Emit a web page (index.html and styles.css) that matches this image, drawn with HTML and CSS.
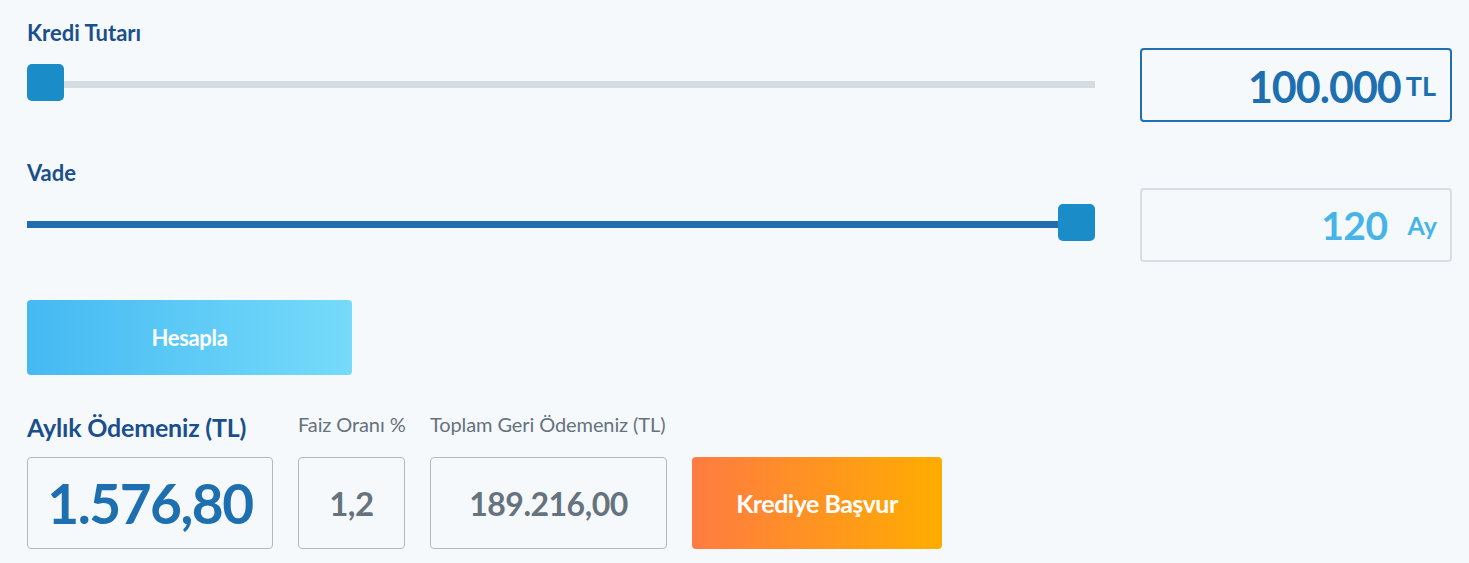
FILE: index.html
```html
<!DOCTYPE html>
<html lang="tr">
<head>
    <meta charset="UTF-8">
    <meta name="viewport" content="width=device-width, initial-scale=1.0">
    <title>Kredi Hesaplama</title>
    <link rel="stylesheet" href="styles.css">
</head>
<body>
    <div class="calculator">
        <div class="field">
            <div class="field-main">
                <label class="field-label" for="amount">Kredi Tutarı</label>
                <input type="range" class="slider" id="amount" min="100000" max="5000000" step="1000" value="100000" style="--fill: 0%">
            </div>
            <div class="value-box active">
                <span class="value">100.000</span>
                <span class="unit">TL</span>
            </div>
        </div>

        <div class="field">
            <div class="field-main">
                <label class="field-label" for="term">Vade</label>
                <input type="range" class="slider" id="term" min="3" max="120" step="1" value="120" style="--fill: 100%">
            </div>
            <div class="value-box">
                <span class="value">120</span>
                <span class="unit">Ay</span>
            </div>
        </div>

        <button class="btn-calc">Hesapla</button>

        <div class="results">
            <div class="result result-main">
                <span class="result-label">Aylık Ödemeniz (TL)</span>
                <div class="result-box">1.576,80</div>
            </div>
            <div class="result result-rate">
                <span class="result-label">Faiz Oranı %</span>
                <div class="result-box">1,2</div>
            </div>
            <div class="result result-total">
                <span class="result-label">Toplam Geri Ödemeniz (TL)</span>
                <div class="result-box">189.216,00</div>
            </div>
            <button class="btn-apply">Krediye Başvur</button>
        </div>
    </div>
</body>
</html>
```

FILE: styles.css
```css
body {
    margin: 0;
    background: #f5f9fc;
    font-family: "Source Sans Pro", Lato, "Liberation Sans", sans-serif;
}

.calculator {
    padding: 20px 18px 0 27px;
}

.field {
    display: flex;
    align-items: flex-end;
    gap: 45px;
    margin-bottom: 38px;
}

.field-main {
    width: 1068px;
    display: flex;
    flex-direction: column;
    padding-bottom: 19px;
}

.field-label {
    color: #1b4f8c;
    font-size: 22px;
    font-weight: 700;
    line-height: 26px;
    margin-bottom: 20px;
}

.slider {
    -webkit-appearance: none;
    appearance: none;
    width: 100%;
    height: 37px;
    margin: 0;
    background: transparent;
}

.slider::-webkit-slider-runnable-track {
    height: 7px;
    background: linear-gradient(to right, #1f6cae var(--fill), #d5dde3 var(--fill));
}

.slider::-webkit-slider-thumb {
    -webkit-appearance: none;
    width: 37px;
    height: 37px;
    margin-top: -17px;
    border-radius: 5px;
    background: #1a8cc7;
}

.value-box {
    width: 312px;
    height: 74px;
    margin-right: -1px;
    box-sizing: border-box;
    border: 2px solid #d8dde2;
    border-radius: 4px;
    display: flex;
    align-items: center;
    justify-content: flex-end;
    padding-right: 13px;
    color: #47b4e8;
}

.value-box .value {
    font-size: 39px;
    font-weight: 700;
    letter-spacing: -0.5px;
    margin-right: 20px;
}

.value-box .unit {
    font-size: 25px;
    font-weight: 700;
}

.value-box.active {
    border-color: #1f6fb2;
    color: #1e6fb0;
    padding-top: 2px;
    padding-right: 14px;
}

.value-box.active .value {
    font-size: 43px;
    margin-right: 5px;
    letter-spacing: -1px;
}

.value-box.active .unit {
    font-size: 27px;
    margin-bottom: 2px;
}

.btn-calc {
    display: block;
    width: 325px;
    height: 75px;
    border: none;
    border-radius: 4px;
    background: linear-gradient(to right, #45b9f2, #76dbfa);
    color: #fff;
    font-family: inherit;
    font-size: 22px;
    font-weight: 700;
    letter-spacing: -0.3px;
    cursor: pointer;
}

.results {
    display: flex;
    align-items: flex-end;
    gap: 25px;
    margin-top: 37px;
}

.result {
    display: flex;
    flex-direction: column;
}

.result-main {
    width: 246px;
}

.result-rate {
    width: 107px;
}

.result-total {
    width: 237px;
}

.result-label {
    color: #66727c;
    font-size: 20px;
    line-height: 24px;
    letter-spacing: -0.1px;
    white-space: nowrap;
    margin-bottom: 21px;
}

.result-main .result-label {
    color: #1b4f8c;
    font-size: 25px;
    font-weight: 700;
    line-height: 30px;
    letter-spacing: -0.2px;
    margin-bottom: 15px;
}

.result-box {
    height: 92px;
    box-sizing: border-box;
    border: 1px solid #b5b9bd;
    border-radius: 4px;
    display: flex;
    align-items: center;
    justify-content: center;
    color: #66727c;
    font-size: 32px;
    font-weight: 700;
    letter-spacing: -0.5px;
}

.result-main .result-box {
    color: #1e6fb0;
    font-size: 55px;
    letter-spacing: -1.5px;
}

.result-rate .result-box {
    font-size: 33px;
}

.btn-apply {
    width: 250px;
    height: 92px;
    border: none;
    border-radius: 4px;
    background: linear-gradient(to right, #ff7b42, #ffad00);
    color: #fff;
    font-family: inherit;
    font-size: 25px;
    font-weight: 700;
    letter-spacing: -0.5px;
    cursor: pointer;
}
```
